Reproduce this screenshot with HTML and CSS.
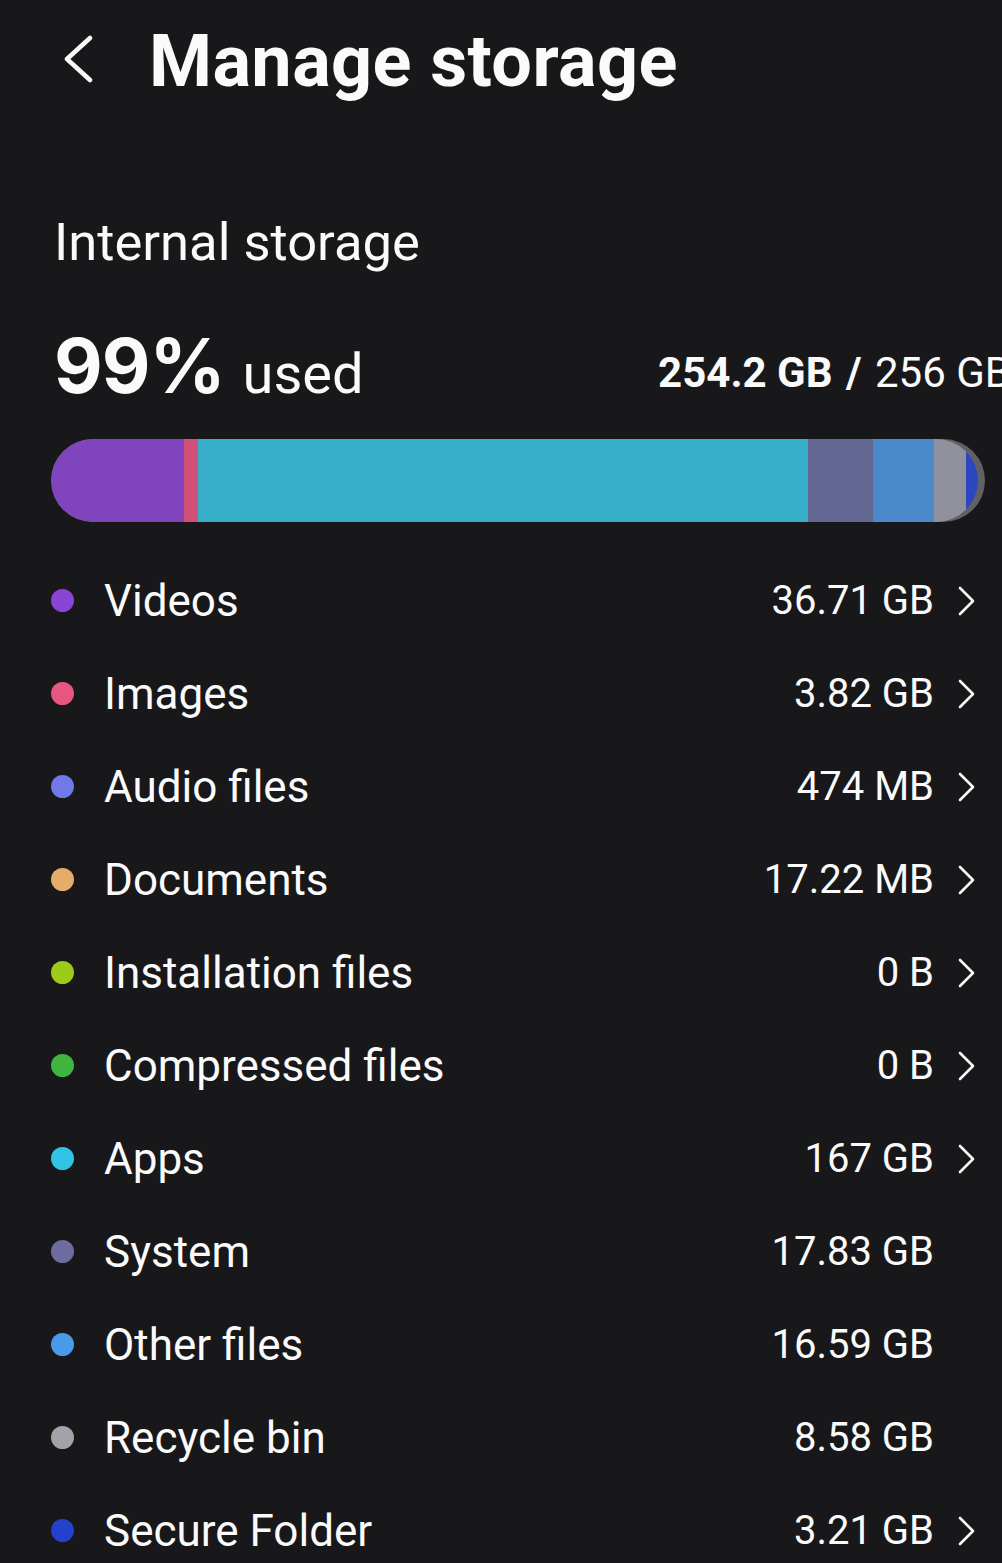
FILE: index.html
```html
<!DOCTYPE html>
<html lang="en">
<head>
<meta charset="utf-8">
<title>Manage storage</title>
<link rel="stylesheet" href="styles.css">
</head>
<body>
<div class="page">
  <header class="header">
    <svg class="back" width="32" height="48" viewBox="0 0 32 48"><polyline points="28,3 5,24 28,45" fill="none" stroke="#fafafa" stroke-width="4.5" stroke-linecap="round" stroke-linejoin="round"/></svg>
    <h1 class="title">Manage storage</h1>
  </header>

  <section class="summary">
    <h2 class="section-title">Internal storage</h2>
    <div class="usage">
      <div class="usage-left"><span class="pct">99%</span><span class="used">used</span></div>
      <div class="usage-right"><b>254.2 GB</b> <b class="slash">/</b> 256 GB</div>
    </div>
    <div class="bar">
      <div class="bar-inner">
        <span class="seg" style="width:133px;background:#8044bd"></span>
        <span class="seg" style="width:14px;background:#d05078"></span>
        <span class="seg" style="width:610px;background:#38afc8"></span>
        <span class="seg" style="width:65px;background:#636893"></span>
        <span class="seg" style="width:61px;background:#4a8acb"></span>
        <span class="seg" style="width:32px;background:#8f919d"></span>
        <span class="seg" style="width:12px;background:#2c46c0"></span>
      </div>
    </div>
  </section>

  <ul class="list">
    <li class="row"><span class="dot" style="background:#8a45d6"></span><span class="label">Videos</span><span class="value">36.71 GB</span><svg class="chev" width="18" height="32" viewBox="0 0 18 32"><polyline points="3,3 16,16 3,29" fill="none" stroke="#fafafa" stroke-width="2.6" stroke-linecap="round" stroke-linejoin="round"/></svg></li>
    <li class="row"><span class="dot" style="background:#e8577f"></span><span class="label">Images</span><span class="value">3.82 GB</span><svg class="chev" width="18" height="32" viewBox="0 0 18 32"><polyline points="3,3 16,16 3,29" fill="none" stroke="#fafafa" stroke-width="2.6" stroke-linecap="round" stroke-linejoin="round"/></svg></li>
    <li class="row"><span class="dot" style="background:#6f79e8"></span><span class="label">Audio files</span><span class="value">474 MB</span><svg class="chev" width="18" height="32" viewBox="0 0 18 32"><polyline points="3,3 16,16 3,29" fill="none" stroke="#fafafa" stroke-width="2.6" stroke-linecap="round" stroke-linejoin="round"/></svg></li>
    <li class="row"><span class="dot" style="background:#e6ac6c"></span><span class="label">Documents</span><span class="value">17.22 MB</span><svg class="chev" width="18" height="32" viewBox="0 0 18 32"><polyline points="3,3 16,16 3,29" fill="none" stroke="#fafafa" stroke-width="2.6" stroke-linecap="round" stroke-linejoin="round"/></svg></li>
    <li class="row"><span class="dot" style="background:#9ccb1a"></span><span class="label">Installation files</span><span class="value">0 B</span><svg class="chev" width="18" height="32" viewBox="0 0 18 32"><polyline points="3,3 16,16 3,29" fill="none" stroke="#fafafa" stroke-width="2.6" stroke-linecap="round" stroke-linejoin="round"/></svg></li>
    <li class="row"><span class="dot" style="background:#3fb43f"></span><span class="label">Compressed files</span><span class="value">0 B</span><svg class="chev" width="18" height="32" viewBox="0 0 18 32"><polyline points="3,3 16,16 3,29" fill="none" stroke="#fafafa" stroke-width="2.6" stroke-linecap="round" stroke-linejoin="round"/></svg></li>
    <li class="row"><span class="dot" style="background:#31c4e6"></span><span class="label">Apps</span><span class="value">167 GB</span><svg class="chev" width="18" height="32" viewBox="0 0 18 32"><polyline points="3,3 16,16 3,29" fill="none" stroke="#fafafa" stroke-width="2.6" stroke-linecap="round" stroke-linejoin="round"/></svg></li>
    <li class="row"><span class="dot" style="background:#6c6d9e"></span><span class="label">System</span><span class="value">17.83 GB</span><span class="chev-space"></span></li>
    <li class="row"><span class="dot" style="background:#4a9aea"></span><span class="label">Other files</span><span class="value">16.59 GB</span><span class="chev-space"></span></li>
    <li class="row"><span class="dot" style="background:#a2a2aa"></span><span class="label">Recycle bin</span><span class="value">8.58 GB</span><span class="chev-space"></span></li>
    <li class="row"><span class="dot" style="background:#2341cc"></span><span class="label">Secure Folder</span><span class="value">3.21 GB</span><svg class="chev" width="18" height="32" viewBox="0 0 18 32"><polyline points="3,3 16,16 3,29" fill="none" stroke="#fafafa" stroke-width="2.6" stroke-linecap="round" stroke-linejoin="round"/></svg></li>
  </ul>
</div>
</body>
</html>
```

FILE: styles.css
```css
* { box-sizing: border-box; }
html, body {
  margin: 0;
  padding: 0;
  background: #18181b;
  overflow: hidden;
}
body {
  font-family: Roboto, "Noto Sans", "Liberation Sans", sans-serif;
  color: #fafafa;
  width: 1002px;
  height: 1563px;
}
.page {
  width: 1002px;
}
.header {
  height: 124px;
  display: flex;
  align-items: center;
  padding-left: 62px;
}
.back {
  display: block;
  margin-top: -6px;
}
.title {
  margin: 0 0 0 55px;
  font-size: 72px;
  font-weight: 700;
  line-height: 1;
  letter-spacing: 0.4px;
}
.summary {
  padding-left: 51px;
}
.section-title {
  margin: 88px 0 0 3px;
  font-size: 52.5px;
  font-weight: 400;
  line-height: 60px;
  height: 60px;
}
.usage {
  margin-top: 54px;
  display: flex;
  align-items: baseline;
  justify-content: space-between;
  white-space: nowrap;
  padding-left: 3px;
  height: 80px;
}
.pct {
  font-family: Inter, Roboto, sans-serif;
  font-size: 75px;
  font-weight: 700;
  line-height: 80px;
  letter-spacing: -1px;
}
.used {
  font-size: 56px;
  font-weight: 400;
  margin-left: 18px;
}
.usage-right {
  align-self: flex-start;
  font-size: 42px;
  line-height: 42px;
  font-weight: 400;
  flex: none;
  margin-right: -9px;
  margin-top: 26px;
}
.usage-right b { font-weight: 700; }
.usage-right .slash { margin: 0 3px; }
.bar {
  margin-top: 33px;
  width: 934px;
  height: 83px;
  border-radius: 42px;
  background: #616164;
  overflow: hidden;
}
.bar-inner {
  display: flex;
  width: 927px;
  height: 83px;
  border-radius: 42px;
  overflow: hidden;
}
.seg {
  display: block;
  flex: none;
  height: 100%;
}
.list {
  list-style: none;
  margin: 32px 0 0 0;
  padding: 0 27px 0 51px;
}
.row {
  height: 93px;
  display: flex;
  align-items: center;
}
.dot {
  width: 23px;
  height: 23px;
  border-radius: 50%;
  flex: none;
}
.label {
  margin-left: 30px;
  font-size: 44px;
  flex: 1;
  white-space: nowrap;
}
.value {
  font-size: 40px;
  white-space: nowrap;
}
.chev, .chev-space {
  display: block;
  flex: none;
  width: 18px;
  height: 32px;
  margin-left: 23px;
}
```
